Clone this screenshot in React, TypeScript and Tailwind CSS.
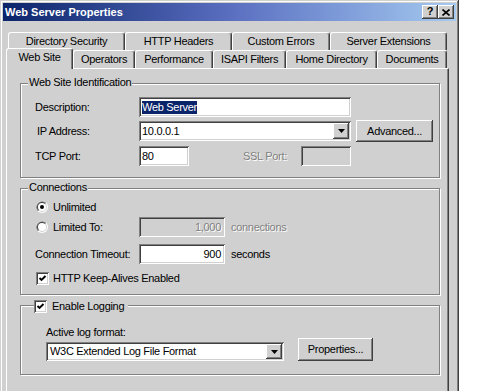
import React from 'react';

const sunken =
  'shadow-[inset_1px_1px_0_#808080,inset_-1px_-1px_0_#ffffff,inset_2px_2px_0_#404040,inset_-2px_-2px_0_#d0d0d0]';
const raised =
  'shadow-[inset_-1px_-1px_0_#404040,inset_1px_1px_0_#ffffff,inset_-2px_-2px_0_#808080,inset_2px_2px_0_#d0d0d0]';
const disabledText = 'text-[#808080] text-shadow-[1px_1px_0_#ffffff]';

const Arrow = () => (
  <svg width="7" height="4" viewBox="0 0 7 4">
    <polygon points="0,0 7,0 3.5,4" fill="#000" />
  </svg>
);

const Radio = ({ checked }: { checked?: boolean }) => (
  <svg width="12" height="12" viewBox="0 0 12 12" className="shrink-0">
    <circle cx="6" cy="6" r="6" fill="#ffffff" />
    <path d="M10.24 1.76 A6 6 0 0 0 1.76 10.24 Z" fill="#808080" />
    <circle cx="6" cy="6" r="5" fill="#d0d0d0" />
    <path d="M9.54 2.46 A5 5 0 0 0 2.46 9.54 Z" fill="#404040" />
    <circle cx="6" cy="6" r="4" fill="#ffffff" />
    {checked && <circle cx="6" cy="6" r="2" fill="#000" />}
  </svg>
);

const Check = () => (
  <div className={`w-[13px] h-[13px] shrink-0 bg-white ${sunken} flex items-center justify-center`}>
    <svg width="9" height="9" viewBox="0 0 9 9">
      <polyline points="1.5,4 3.5,6 7.5,2" fill="none" stroke="#000" strokeWidth="1.9" />
    </svg>
  </div>
);

const Tab = ({ label, w, selected }: { label: string; w: string; selected?: boolean }) => (
  <div
    className={`${w} ${
      selected ? 'h-[21px] -mb-px relative z-10 pb-[3px]' : 'h-[18px]'
    } shrink-0 flex items-center justify-center bg-[#d0d0d0] border-l border-t border-white border-r border-r-[#404040] shadow-[inset_-1px_0_0_#808080] rounded-t-[3px]`}
  >
    {label}
  </div>
);

const Group = ({
  legend,
  className,
  children,
}: {
  legend: React.ReactNode;
  className: string;
  children: React.ReactNode;
}) => (
  <div
    className={`relative w-[420px] border border-[#808080] shadow-[inset_1px_1px_0_#ffffff,1px_1px_0_#ffffff] ${className}`}
  >
    {legend}
    {children}
  </div>
);

const Legend = ({ text }: { text: string }) => (
  <div className="absolute -top-[8px] left-[7px] px-[1px] bg-[#d0d0d0] leading-[13px]">{text}</div>
);

export default function App() {
  return (
    <div className="w-[485px] h-[391px] bg-white overflow-hidden font-['Liberation_Sans',Arial,sans-serif] text-[11px] tracking-[-0.3px] text-black">
      <div className="w-[459px] h-[430px] bg-[#d0d0d0] p-[3px] shadow-[inset_-1px_-1px_0_#404040,inset_1px_1px_0_#d0d0d0,inset_-2px_-2px_0_#808080,inset_2px_2px_0_#ffffff]">
        {/* Caption */}
        <div className="h-[18px] flex items-center px-[2px] bg-linear-to-r from-[#0a246a] via-[#5a6ec0] to-[#a6caf0]">
          <span className="flex-1 text-white font-bold tracking-normal">Web Server Properties</span>
          <div className="flex">
            <div className={`w-[16px] h-[14px] bg-[#d0d0d0] ${raised} flex items-center justify-center font-bold tracking-normal leading-none pb-px`}>
              ?
            </div>
            <div className={`w-[16px] h-[14px] bg-[#d0d0d0] ${raised} flex items-center justify-center`}>
              <svg width="8" height="7" viewBox="0 0 8 7">
                <path d="M0.5 0.5 L7.5 6.5 M7.5 0.5 L0.5 6.5" stroke="#000" strokeWidth="1.6" />
              </svg>
            </div>
          </div>
        </div>

        <div className="pl-[3px] pt-[11px]">
          {/* Tabs */}
          <div className="flex pl-[2px]">
            <Tab label="Directory Security" w="w-[117px]" />
            <Tab label="HTTP Headers" w="w-[107px]" />
            <Tab label="Custom Errors" w="w-[98px]" />
            <Tab label="Server Extensions" w="w-[117px]" />
          </div>
          <div className="flex items-end h-[20px] -mt-[2px]">
            <Tab label="Web Site" w="w-[67px]" selected />
            <Tab label="Operators" w="w-[62px]" />
            <Tab label="Performance" w="w-[78px]" />
            <Tab label="ISAPI Filters" w="w-[73px]" />
            <Tab label="Home Directory" w="w-[91px]" />
            <Tab label="Documents" w="w-[70px]" />
          </div>

          {/* Panel */}
          <div className="w-[443px] h-[340px] border-l border-t border-white border-r border-r-[#404040] shadow-[inset_-1px_0_0_#808080] pl-[13px] pt-[14px]">
            <Group legend={<Legend text="Web Site Identification" />} className="pt-[13px] pb-[11px]">
              <div className="flex items-center h-[20px] pl-[14px]">
                <span className="w-[104px]">Description:</span>
                <div className={`w-[212px] h-[20px] bg-white ${sunken} flex items-center pl-[3px]`}>
                  <span className="bg-[#0a246a] text-white leading-[13px]">Web Server</span>
                </div>
              </div>
              <div className="flex items-center h-[20px] pl-[14px] mt-[4px]">
                <span className="w-[104px] pl-[2px]">IP Address:</span>
                <div className={`w-[212px] h-[20px] bg-white ${sunken} flex items-center pl-[3px] pr-[2px]`}>
                  <span className="flex-1">10.0.0.1</span>
                  <div className={`w-[16px] h-[16px] bg-[#d0d0d0] ${raised} flex items-center justify-center`}>
                    <Arrow />
                  </div>
                </div>
                <div className={`ml-[5px] w-[77px] h-[22px] shrink-0 bg-[#d0d0d0] ${raised} flex items-center justify-center`}>
                  Advanced...
                </div>
              </div>
              <div className="flex items-center h-[20px] pl-[14px] mt-[5px]">
                <span className="w-[104px]">TCP Port:</span>
                <div className={`w-[50px] h-[20px] bg-white ${sunken} flex items-center pl-[3px]`}>80</div>
                <span className={`ml-[54px] w-[58px] ${disabledText}`}>SSL Port:</span>
                <div className={`w-[50px] h-[20px] bg-[#d0d0d0] ${sunken}`} />
              </div>
            </Group>

            <Group legend={<Legend text="Connections" />} className="mt-[10px] pt-[10px] pb-[8px]">
              <div className="flex items-center h-[16px] pl-[15px]">
                <Radio checked />
                <span className="ml-[5px]">Unlimited</span>
              </div>
              <div className="flex items-center h-[20px] pl-[15px] mt-[2px]">
                <Radio />
                <span className="ml-[5px] w-[86px]">Limited To:</span>
                <div className={`w-[86px] h-[20px] bg-[#d0d0d0] ${sunken} flex items-center justify-end pr-[4px] ${disabledText}`}>
                  1,000
                </div>
                <span className={`ml-[6px] ${disabledText}`}>connections</span>
              </div>
              <div className="flex items-center h-[20px] pl-[14px] mt-[7px]">
                <span className="w-[104px]">Connection Timeout:</span>
                <div className={`w-[86px] h-[20px] bg-white ${sunken} flex items-center justify-end pr-[4px]`}>900</div>
                <span className="ml-[6px]">seconds</span>
              </div>
              <div className="flex items-center h-[16px] pl-[15px] mt-[6px]">
                <Check />
                <span className="ml-[4px]">HTTP Keep-Alives Enabled</span>
              </div>
            </Group>

            <Group
              legend={
                <div className="absolute -top-[6px] left-[13px] pr-[4px] flex items-center bg-[#d0d0d0] h-[13px]">
                  <Check />
                  <span className="ml-[5px]">Enable Logging</span>
                </div>
              }
              className="mt-[10px] pt-[20px] pb-[13px]"
            >
              <div className="pl-[25px] leading-[13px]">Active log format:</div>
              <div className="flex items-end pl-[25px] -mt-px">
                <div className={`w-[238px] h-[19px] bg-white ${sunken} flex items-center pl-[4px] pr-[2px]`}>
                  <span className="flex-1">W3C Extended Log File Format</span>
                  <div className={`w-[16px] h-[15px] bg-[#d0d0d0] ${raised} flex items-center justify-center`}>
                    <Arrow />
                  </div>
                </div>
                <div className={`ml-[14px] w-[75px] h-[23px] bg-[#d0d0d0] ${raised} flex items-center justify-center`}>
                  Properties...
                </div>
              </div>
            </Group>
          </div>
        </div>
      </div>
    </div>
  );
}
